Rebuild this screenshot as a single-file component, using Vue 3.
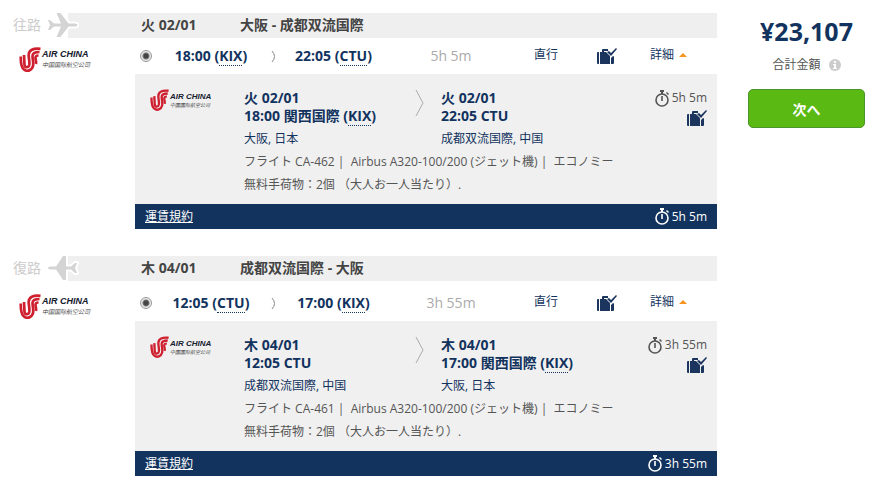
<script setup>
import { ref } from "vue";

const kix = { name: "関西国際", code: "KIX", city: "大阪, 日本" };
const ctu = { name: "", code: "CTU", city: "成都双流国際, 中国" };

const legs = ref([
	{
		id: "out",
		label: "往路",
		date: "火 02/01",
		route: "大阪 - 成都双流国際",
		departure: "18:00",
		arrival: "22:05",
		duration: "5h 5m",
		from: kix,
		to: ctu,
		flight: "CA-462",
		open: true,
	},
	{
		id: "back",
		label: "復路",
		date: "木 04/01",
		route: "成都双流国際 - 大阪",
		departure: "12:05",
		arrival: "17:00",
		duration: "3h 55m",
		from: ctu,
		to: kix,
		flight: "CA-461",
		open: true,
	},
]);
</script>
<template>
	<svg class="symbols" aria-hidden="true">
		<symbol id="plane-out" viewBox="0 0 32 28">
			<path
				d="M1 9h2l4 3.500h7L9.500 2h4l8 10.500h5c2.500 0 4 .5 4 1.500s-1.500 1.500-4 1.500h-5L13.500 26h-4L14 15.500H7L3 19H1l2-5z"
			/>
		</symbol>
		<symbol id="plane-back" viewBox="0 0 32 28">
			<path
				d="M30 9h-2l-4 3.500h-5V2h-3L9 12.500H5c-2.500 0-4 .5-4 1.500s1.500 1.500 4 1.500h4L16 26h3V15.500h5l4 3.500h2l-2-5z"
			/>
		</symbol>
		<symbol id="phoenix" viewBox="0 0 22 25">
			<g class="feathers">
				<path d="M21.500 1.800C14 1 10 3 9.700 7.500c-.2 4 1.300 7 .5 10.500-.8 3-4.200 3-4.700 0L5 8" />
				<path d="M20.500 5c-5 0-7 1-7 4 0 3 1.300 6 .5 10-1 4.500-6 6-9 3.500-3-2-3.300-7-3.300-13" />
				<path d="M19.500 8.500c-2.500 0-3 .5-3 2.500s1 3 .5 6" />
			</g>
		</symbol>
		<symbol id="bags" viewBox="0 0 20 17">
			<path d="M1 4h1v12H1q-1 0-1-1V5q0-1 1-1z" />
			<path d="M3 4h2V2q0-1 1-1h5v2H7v1h2l4 4v8H3z" />
			<path d="M14 10l2-2q1 0 1 1v6q0 1-1 1h-2z" />
			<path d="M10 4l2-1 2 2 5-5 1 1-6 7z" />
		</symbol>
		<symbol id="stopwatch" viewBox="0 0 14 17">
			<circle class="line" cx="7" cy="10" r="6" />
			<path d="M5 0h4v2H8v2H6V2H5zM12 2l2 2-1 1-2-2zM6.200 6h1.600v5H6.200z" />
		</symbol>
	</svg>
	<main class="page">
		<div class="legs">
			<section class="leg" v-for="leg of legs" :key="leg.id">
				<header class="leg-head">
					<div class="way">
						{{ leg.label }}
						<svg class="plane" aria-hidden="true"><use :href="'#plane-' + leg.id" /></svg>
					</div>
					<h2 class="bar">
						<span class="bar-date">{{ leg.date }}</span>
						<span>{{ leg.route }}</span>
					</h2>
				</header>
				<div class="summary">
					<div class="logo">
						<svg class="phoenix"><use href="#phoenix" /></svg>
						<div>
							<div class="logo-name">AIR CHINA</div>
							<div class="logo-cn">中国国际航空公司</div>
						</div>
					</div>
					<input type="radio" class="radio" :id="leg.id" :name="leg.id" checked />
					<label class="time" :for="leg.id">
						{{ leg.departure }} (<abbr>{{ leg.from.code }}</abbr>)
					</label>
					<svg class="arrow-small" viewBox="0 0 5 11" aria-hidden="true"><path d="M1 0q5 5.500 0 11" /></svg>
					<label class="time" :for="leg.id">
						{{ leg.arrival }} (<abbr>{{ leg.to.code }}</abbr>)
					</label>
					<span class="duration">{{ leg.duration }}</span>
					<span class="stops">直行</span>
					<svg class="bags"><use href="#bags" /></svg>
					<button type="button" class="toggle" @click="leg.open = !leg.open">
						詳細<span class="caret" :class="{ closed: !leg.open }"></span>
					</button>
				</div>
				<div class="details" v-show="leg.open">
					<div class="segment">
						<div class="logo logo-sm">
							<svg class="phoenix"><use href="#phoenix" /></svg>
							<div>
								<div class="logo-name">AIR CHINA</div>
								<div class="logo-cn">中国国际航空公司</div>
							</div>
						</div>
						<div class="info">
							<div class="airports">
								<div>
									<p class="strong">{{ leg.date }}</p>
									<p class="strong">
										{{ leg.departure }}
										<template v-if="leg.from.name">{{ leg.from.name }} (<abbr>{{ leg.from.code }}</abbr>)</template>
										<template v-else>{{ leg.from.code }}</template>
									</p>
									<p class="city">{{ leg.from.city }}</p>
								</div>
								<svg class="arrow" viewBox="0 0 9 28" aria-hidden="true"><path d="M1 1l7 13-7 13" /></svg>
								<div>
									<p class="strong">{{ leg.date }}</p>
									<p class="strong">
										{{ leg.arrival }}
										<template v-if="leg.to.name">{{ leg.to.name }} (<abbr>{{ leg.to.code }}</abbr>)</template>
										<template v-else>{{ leg.to.code }}</template>
									</p>
									<p class="city">{{ leg.to.city }}</p>
								</div>
							</div>
							<p class="note">フライト {{ leg.flight }} |&nbsp; Airbus A320-100/200 (ジェット機) |&nbsp; エコノミー</p>
							<p class="note">無料手荷物：2個 （大人お一人当たり）.</p>
						</div>
						<div class="side">
							<span class="clock"><svg class="watch"><use href="#stopwatch" /></svg>{{ leg.duration }}</span>
							<svg class="bags"><use href="#bags" /></svg>
						</div>
					</div>
					<footer class="leg-foot">
						<a href="#">運賃規約</a>
						<span class="clock"><svg class="watch"><use href="#stopwatch" /></svg>{{ leg.duration }}</span>
					</footer>
				</div>
			</section>
		</div>
		<aside class="total">
			<strong class="price">¥23,107</strong>
			<p class="total-label">
				合計金額
				<svg class="help" viewBox="0 0 12 12" aria-hidden="true">
					<circle cx="6" cy="6" r="6" />
					<path d="M5 2h2v2H5zM4 5h3v4h1v1H4V9h1V6H4z" />
				</svg>
			</p>
			<button type="button" class="next">次へ</button>
		</aside>
	</main>
</template>
<style>
	body {
		margin: 0;
		background: #fff;
	}
</style>
<style scoped>
	.symbols {
		position: absolute;
		width: 0;
		height: 0;
	}
	.page {
		display: flex;
		gap: 31px;
		padding: 13px 7px 13px 0;
		font-family: "Open Sans", "Noto Sans CJK JP", sans-serif;
		font-size: 12px;
		line-height: 20px;
		color: #555;
	}
	p,
	h2 {
		margin: 0;
	}
	abbr {
		border-bottom: 1px dotted #12335e;
	}
	.legs {
		flex: 1;
		display: flex;
		flex-direction: column;
		gap: 27px;
	}

	/* heading */
	.leg-head {
		display: flex;
		height: 25px;
	}
	.way {
		box-sizing: border-box;
		width: 68px;
		padding: 0 0 2px 13px;
		display: flex;
		align-items: center;
		gap: 6px;
		font-size: 14px;
		white-space: nowrap;
		color: #ccc;
	}
	.plane {
		position: relative;
		flex: none;
		width: 32px;
		height: 28px;
		fill: #d4d4d4;
		stroke: #fff;
		stroke-width: 4px;
		stroke-linejoin: round;
		paint-order: stroke;
		overflow: visible;
	}
	.bar {
		flex: 1;
		display: flex;
		align-items: center;
		padding: 0 0 2px 73px;
		background: #efefef;
		font-size: 14px;
		font-weight: bold;
		color: #444;
	}
	.bar-date {
		width: 99px;
	}

	/* airline logo */
	.logo {
		display: flex;
		align-items: center;
		gap: 1px;
		justify-self: start;
		margin: 6px 0 0 19px;
		font-style: italic;
		white-space: nowrap;
	}
	.phoenix {
		width: 22px;
		height: 25px;
	}
	.feathers {
		fill: none;
		stroke: #cf2030;
		stroke-width: 2.7px;
	}
	.logo-name {
		font-family: "Liberation Sans", sans-serif;
		font-size: 9px;
		font-weight: bold;
		line-height: 11px;
		color: #16202e;
	}
	.logo-cn {
		font-family: "Noto Sans CJK SC", sans-serif;
		font-size: 6px;
		line-height: 9px;
		color: #444;
	}

	/* summary row */
	.summary {
		display: grid;
		grid-template-columns: 135px 22px 108fr 16px 105fr 130fr 60fr 62fr 79fr;
		grid-auto-rows: 36px;
		align-items: center;
		justify-items: center;
	}
	.leg + .leg .summary {
		padding-top: 4px;
	}
	.radio {
		appearance: none;
		width: 12px;
		height: 12px;
		margin: 0;
		border: 1px solid #999;
		border-radius: 50%;
		background: radial-gradient(circle, #444 0 2px, #777 3px, #e8e8e8 4px);
	}
	.time {
		font-size: 14px;
		font-weight: bold;
		white-space: nowrap;
		color: #12335e;
	}
	.arrow-small {
		width: 5px;
		height: 11px;
		fill: none;
		stroke: #888;
	}
	.duration {
		font-size: 14px;
		color: #aaa;
	}
	.stops,
	.toggle {
		padding-bottom: 3px;
		color: #12335e;
	}
	.bags {
		width: 20px;
		height: 17px;
		fill: #1c355e;
	}
	.toggle {
		justify-self: start;
		display: flex;
		align-items: center;
		gap: 5px;
		margin-left: 12px;
		padding-top: 0;
		padding-left: 0;
		border: 0;
		background: none;
		font: inherit;
		white-space: nowrap;
		cursor: pointer;
	}
	.caret {
		border: 4px solid transparent;
		border-top: 0;
		border-bottom-color: #f7941d;
	}
	.caret.closed {
		transform: rotate(180deg);
	}

	/* details */
	.details {
		margin-left: 135px;
		background: #f0f0f0;
	}
	.segment {
		display: flex;
		padding: 15px 10px 8px 15px;
	}
	.logo-sm {
		flex: none;
		align-self: flex-start;
		width: 94px;
		margin: 0;
	}
	.logo-sm .phoenix {
		width: 19px;
		height: 22px;
	}
	.logo-sm .logo-name {
		font-size: 8px;
		line-height: 9px;
	}
	.logo-sm .logo-cn {
		font-size: 5px;
		line-height: 8px;
	}
	.info {
		flex: 1;
	}
	.airports {
		display: grid;
		grid-template-columns: 171px 26px 1fr;
	}
	.strong {
		font-size: 14px;
		font-weight: bold;
		line-height: 18px;
		white-space: nowrap;
		color: #12335e;
	}
	.city {
		margin-top: 2px;
		line-height: 23px;
		color: #12335e;
	}
	.arrow {
		width: 9px;
		height: 28px;
		fill: none;
		stroke: #aaa;
	}
	.note {
		line-height: 23px;
		white-space: nowrap;
	}
	.side {
		display: flex;
		flex-direction: column;
		align-items: flex-end;
		gap: 3px;
	}
	.clock {
		display: flex;
		align-items: center;
		gap: 3px;
		line-height: 18px;
		white-space: nowrap;
	}
	.watch {
		width: 14px;
		height: 17px;
		fill: currentColor;
	}
	.line {
		fill: none;
		stroke: currentColor;
		stroke-width: 1.6px;
	}
	.leg-foot {
		display: flex;
		align-items: center;
		justify-content: space-between;
		height: 25px;
		padding: 0 10px;
		background: #12335e;
		color: #fff;
	}
	.leg-foot a {
		color: #fff;
	}

	/* price */
	.total {
		width: 117px;
		display: flex;
		flex-direction: column;
		align-items: center;
	}
	.price {
		font-size: 25px;
		line-height: 36px;
		color: #12335e;
	}
	.total-label {
		display: flex;
		align-items: center;
		gap: 8px;
		margin: 6px 0 14px;
	}
	.help {
		width: 12px;
		height: 12px;
		fill: #ccc;
	}
	.help path {
		fill: #fff;
	}
	.next {
		align-self: stretch;
		height: 39px;
		border: 1px solid #4a962a;
		border-radius: 5px;
		background: #5ab912;
		font: bold 14px "Open Sans", "Noto Sans CJK JP", sans-serif;
		color: #fff;
		cursor: pointer;
	}
</style>
